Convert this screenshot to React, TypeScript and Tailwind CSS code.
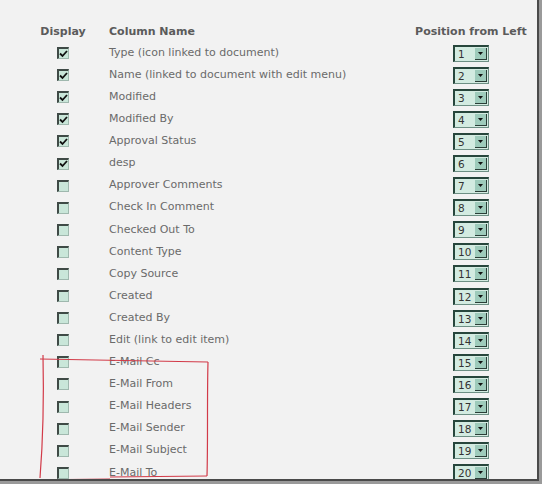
import React from 'react';

const columns = [
  { name: 'Type (icon linked to document)', on: true },
  { name: 'Name (linked to document with edit menu)', on: true },
  { name: 'Modified', on: true },
  { name: 'Modified By', on: true },
  { name: 'Approval Status', on: true },
  { name: 'desp', on: true },
  { name: 'Approver Comments', on: false },
  { name: 'Check In Comment', on: false },
  { name: 'Checked Out To', on: false },
  { name: 'Content Type', on: false },
  { name: 'Copy Source', on: false },
  { name: 'Created', on: false },
  { name: 'Created By', on: false },
  { name: 'Edit (link to edit item)', on: false },
  { name: 'E-Mail Cc', on: false },
  { name: 'E-Mail From', on: false },
  { name: 'E-Mail Headers', on: false },
  { name: 'E-Mail Sender', on: false },
  { name: 'E-Mail Subject', on: false },
  { name: 'E-Mail To', on: false },
];

function CheckBox({ checked }: { checked: boolean }) {
  return (
    <div className="w-[12px] h-[12px] bg-[#c9e6d9] border-t-[2px] border-l-[2px] border-r border-b border-t-[#3f4a46] border-l-[#3f4a46] border-r-[#9fb8ae] border-b-[#9fb8ae] flex items-center justify-center">
      {checked && (
        <svg width="9" height="8" viewBox="0 0 9 8">
          <path d="M1 3.5 L3.5 6 L8 1" fill="none" stroke="#111" strokeWidth="1.8" />
        </svg>
      )}
    </div>
  );
}

function PositionSelect({ value }: { value: number }) {
  return (
    <div className="flex h-[17px] w-[36px] border-t-[2px] border-l-[2px] border-r border-b border-t-[#27463c] border-l-[#27463c] border-r-[#6d8f84] border-b-[#6d8f84] bg-[#d3ebe1]">
      <div className="flex-1 pl-[3px] text-[10.5px] leading-[14px] text-[#333]">{value}</div>
      <div className="w-[12px] mr-[1px] my-[1px] bg-[#9ecbbb] border-r border-b border-[#2a3d37] flex items-center justify-center">
        <svg width="5" height="3" viewBox="0 0 5 3">
          <path d="M0 0 H5 L2.5 3 Z" fill="#111" />
        </svg>
      </div>
    </div>
  );
}

export default function App() {
  return (
    <div className="w-[542px] h-[484px] bg-[#9a9a9a] overflow-hidden" style={{ fontFamily: '"DejaVu Sans", Verdana, sans-serif' }}>
      <div className="relative w-[539px] h-[481px] bg-[#f2f2f2] border-r-[2px] border-b-[2px] border-[#4a4a4a] overflow-hidden">
        <div className="pt-[22px] pl-[36px]">
          {/* header */}
          <div className="grid grid-cols-[54px_324px_114px] h-[20px] items-center text-[11px] font-bold text-[#5b5b5b]">
            <div className="text-center">Display</div>
            <div className="pl-[19px]">Column Name</div>
            <div className="text-center">Position from Left</div>
          </div>
          {columns.map((c, i) => (
            <div key={c.name} className="grid grid-cols-[54px_324px_114px] h-[22.1px] items-center text-[11px] text-[#6a6a6a]">
              <div className="flex justify-center">
                <CheckBox checked={c.on} />
              </div>
              <div className="pl-[19px]">{c.name}</div>
              <div className="flex justify-center">
                <PositionSelect value={i + 1} />
              </div>
            </div>
          ))}
        </div>

        {/* hand-drawn annotation */}
        <svg className="absolute left-0 top-0 pointer-events-none" width="539" height="481">
          <path d="M40 359 C 90 360, 150 361, 208 362" fill="none" stroke="#d23a48" strokeWidth="1.2" />
          <path d="M43 355 C 44 400, 43 440, 40 478" fill="none" stroke="#d23a48" strokeWidth="1.2" />
          <path d="M208 362 C 207 400, 208 440, 207 476" fill="none" stroke="#d23a48" strokeWidth="1.2" />
          <path d="M37 480 L 110 479" fill="none" stroke="#d23a48" strokeWidth="1.2" />
          <path d="M110 477 L 207 476" fill="none" stroke="#d23a48" strokeWidth="1.2" />
        </svg>
      </div>
    </div>
  );
}
